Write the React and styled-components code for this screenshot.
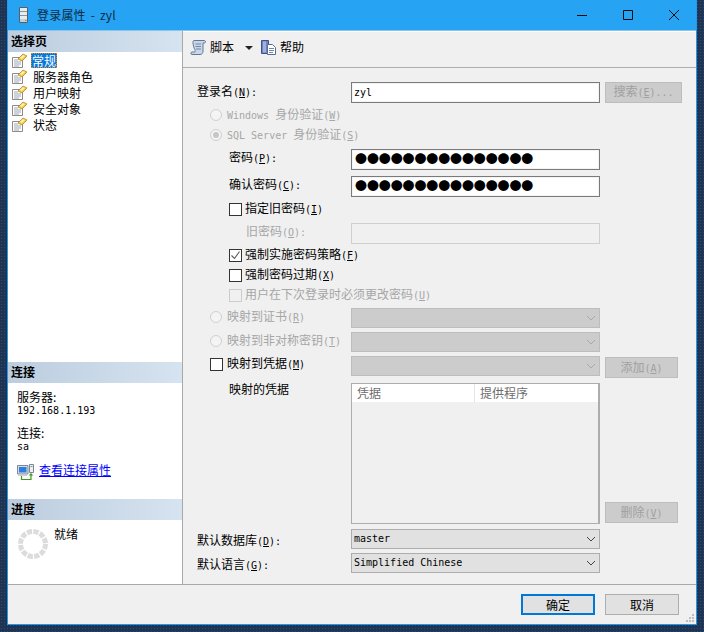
import React from 'react';
import styled, { createGlobalStyle } from 'styled-components';

const GlobalStyle = createGlobalStyle`
  html, body {
    margin: 0;
    padding: 0;
    background: #1f3453;
  }
  body {
    font-family: "Noto Sans CJK SC", "Liberation Sans", sans-serif;
    font-size: 12px;
    line-height: 16px;
    color: #000;
  }
`;

const Desktop = styled.div`
  width: 704px;
  height: 632px;
  box-sizing: border-box;
  padding: 0 7px 7px;
  background-color: #1f3453;
  background-image: radial-gradient(#2f4a70 0.7px, transparent 0.8px);
  background-size: 3px 3px;
  overflow: hidden;
`;

const Window = styled.div`
  height: 625px;
  box-sizing: border-box;
  border: 1px solid #1e9bf0;
  border-top: 0;
  display: flex;
  flex-direction: column;
  background: #f0f0f0;
`;

const TitleBar = styled.div`
  height: 31px;
  flex: none;
  box-sizing: border-box;
  background: #27a3f4;
  border-bottom: 1px solid #8cc3e8;
  display: flex;
  align-items: center;
  padding-left: 8px;
  color: #0c2c44;
`;

const TitleText = styled.span`
  margin-left: 5px;
  flex: 1;
  word-spacing: 2px;
  letter-spacing: 0.2px;
`;

const WinButtons = styled.div`
  display: flex;
  align-items: center;
  gap: 36px;
  padding-right: 17px;
`;

const Body = styled.div`
  flex: 1;
  min-height: 0;
  display: flex;
  border-bottom: 1px solid #a9a9a9;
`;

const Side = styled.div`
  width: 175px;
  flex: none;
  box-sizing: border-box;
  background: #fff;
  border-right: 1px solid #a9a9a9;
  display: flex;
  flex-direction: column;
`;

const SideHead = styled.div`
  height: 21px;
  flex: none;
  box-sizing: border-box;
  padding: 2px 0 0 3px;
  font-weight: 700;
  background: linear-gradient(90deg, #bccddf, #d6e3f0);
`;

const PageList = styled.div`
  flex: 1;
`;

const PageItem = styled.div`
  height: 16px;
  display: flex;
  align-items: center;
  padding-left: 3px;
  gap: 3px;
`;

const PageLabel = styled.span`
  padding: 0 1px;
  margin-left: ${p => (p.$active ? '0' : '1px')};
  height: 15px;
  line-height: 15px;
  color: ${p => (p.$active ? '#fff' : '#000')};
  background: ${p => (p.$active ? '#0a78d7' : 'transparent')};
  outline: ${p => (p.$active ? '1px dotted #e08a20' : 'none')};
  outline-offset: -1px;
`;

const ConnBox = styled.div`
  height: 116px;
  flex: none;
  box-sizing: border-box;
  padding: 8px 0 0 9px;
`;

const ConnLine = styled.div`
  height: 12px;
  line-height: 12px;
  margin-top: ${p => p.$top || 0}px;
`;

const Mono = styled.span`
  font-family: "DejaVu Sans Mono", "Liberation Mono", monospace;
  font-size: 10px;
  white-space: pre;
`;

const Hot = styled(Mono)`
  text-decoration: underline;
`;

const LinkRow = styled.div`
  display: flex;
  align-items: center;
  gap: 5px;
  margin-top: 11px;
`;

const LinkText = styled.a`
  color: #0000ff;
  text-decoration: underline;
  margin-bottom: 4px;
`;

const ProgressBox = styled.div`
  flex: none;
  height: 64px;
  padding: 9px 0 0 10px;
  display: flex;
  gap: 6px;
  align-items: flex-start;
  box-sizing: border-box;
`;

const ProgressText = styled.span`
  margin-top: -3px;
`;

const Main = styled.div`
  flex: 1;
  min-width: 0;
  display: flex;
  flex-direction: column;
`;

const Toolbar = styled.div`
  height: 37px;
  flex: none;
  box-sizing: border-box;
  border-bottom: 1px solid #aeaeae;
  border-top: 1px solid #fff;
  display: flex;
  align-items: center;
  padding: 0 0 5px 7px;
`;

const ToolItem = styled.div`
  display: flex;
  align-items: center;
  gap: 3px;
`;

const Caret = styled.span`
  width: 0;
  height: 0;
  border-left: 4px solid transparent;
  border-right: 4px solid transparent;
  border-top: 4px solid #222;
  margin: 2px 7px 0 11px;
`;

const Form = styled.div`
  flex: 1;
  padding: 13px 0 0 14px;
  display: flex;
  flex-direction: column;
`;

const Row = styled.div`
  display: grid;
  grid-template-columns: 154px 249px auto;
  align-items: ${p => p.$align || 'center'};
  height: ${p => p.$h || 21}px;
  margin-top: ${p => p.$top || 0}px;
`;

const Label = styled.label`
  padding-left: ${p => p.$indent || 0}px;
  color: ${p => (p.$off ? '#a6a6a6' : '#000')};
  margin-top: ${p => p.$shift || 0}px;
  white-space: nowrap;
  display: flex;
  align-items: center;
`;

const Radio = styled.span`
  width: 12px;
  height: 12px;
  box-sizing: border-box;
  flex: none;
  border-radius: 50%;
  border: 1px solid #cfcfcf;
  background: #f4f4f4;
  margin-right: 5px;
  display: grid;
  place-items: center;
  &::after {
    content: '';
    width: 6px;
    height: 6px;
    border-radius: 50%;
    background: ${p => (p.$on ? '#c6c6c6' : 'transparent')};
  }
`;

const Check = styled.span`
  width: 13px;
  height: 13px;
  box-sizing: border-box;
  flex: none;
  border: 1px solid ${p => (p.$off ? '#cccccc' : '#333')};
  background: ${p => (p.$off ? '#f0f0f0' : '#fff')};
  margin-right: ${p => p.$gap || 3}px;
  display: grid;
  place-items: center;
`;

const Input = styled.div`
  height: 21px;
  box-sizing: border-box;
  margin-top: ${p => p.$top || 0}px;
  border: 1px solid ${p => (p.$off ? '#cfcfcf' : '#7a7a7a')};
  background: ${p => (p.$off ? '#f0f0f0' : '#fff')};
  box-shadow: ${p => (p.$off ? 'none' : 'inset 0 0 0 1px #f4f4f4')};
  padding-left: 2px;
  line-height: 18px;
  display: flex;
  align-items: center;
  overflow: hidden;
`;

const Dots = styled.span`
  font-size: 12px;
  line-height: 18px;
  letter-spacing: -0.12px;
  margin: 0 0 2px 1px;
  white-space: nowrap;
`;

const Select = styled.div`
  height: 20px;
  box-sizing: border-box;
  border: 1px solid ${p => (p.$off ? '#bdbdbd' : '#adadad')};
  background: ${p => (p.$off ? '#cccccc' : '#e1e1e1')};
  display: flex;
  align-items: center;
  padding: 0 3px 1px 2px;
  justify-content: space-between;
`;

const Button = styled.div`
  width: ${p => p.$w || 73}px;
  height: 21px;
  box-sizing: border-box;
  margin-left: 5px;
  margin-top: ${p => p.$top || 0}px;
  border: 1px solid #bdbdbd;
  background: #cccccc;
  color: #a0a0a0;
  display: flex;
  align-items: center;
  justify-content: center;
  white-space: nowrap;
`;

const CredTable = styled.div`
  height: 141px;
  box-sizing: border-box;
  border: 1px solid #adadad;
  border-right-width: 2px;
  background: #f0f0f0;
`;

const CredHead = styled.div`
  height: 18px;
  background: #fff;
  display: grid;
  grid-template-columns: 122px 1fr;
  color: #6d6d6d;
  line-height: 18px;
`;

const CredCol = styled.span`
  padding-left: 5px;
  & + & {
    border-left: 1px solid #e5e5e5;
  }
`;

const Footer = styled.div`
  height: 39px;
  flex: none;
  position: relative;
  display: flex;
  justify-content: flex-end;
  gap: 10px;
  padding: 9px 17px 0 0;
  box-sizing: border-box;
`;

const DialogButton = styled.div`
  width: 74px;
  height: 21px;
  box-sizing: border-box;
  border: ${p => (p.$primary ? '2px solid #0078d7' : '1px solid #adadad')};
  background: #e1e1e1;
  display: flex;
  align-items: center;
  justify-content: center;
`;

const Grip = styled.svg`
  position: absolute;
  right: 1px;
  bottom: 1px;
`;

const Chevron = ({ off }) => (
  <svg width="10" height="6" viewBox="0 0 10 6">
    <path d="M1 1l4 4 4-4" fill="none" stroke={off ? '#a9a9a9' : '#444'} strokeWidth="1" />
  </svg>
);

const PageIcon = () => (
  <svg width="17" height="15" viewBox="0 0 17 15">
    <path d="M1.5 4.5h10v10h-10z" fill="#fff" stroke="#8c8c8c" />
    <path d="M3 7h4M3 9h7M3 11h7M3 13h5" stroke="#9aa7b8" strokeWidth="1" />
    <path d="M7 6l5-5 4 2-5 5z" fill="#f3c64a" stroke="#b58a1c" strokeWidth="0.8" />
    <path d="M9 5l3-3 2 1-3 3z" fill="#fff1b0" />
  </svg>
);

const ServerIcon = () => (
  <svg width="16" height="18" viewBox="0 0 16 18">
    <path d="M3.5 1.5h8v15h-8z" fill="#e8ecef" stroke="#55606b" />
    <path d="M4 5h7v1H4zM4 9h7v1H4z" fill="#8895a1" />
    <path d="M4 13h7v3H4z" fill="#c6ced5" />
    <path d="M9 14h1.5v1H9z" fill="#6ea84a" />
  </svg>
);

const ScriptIcon = () => (
  <svg width="17" height="17" viewBox="0 0 17 17">
    <path d="M4 1.5h10.5c1.2 0 1.2 2.5 0 2.5H13v8c0 2-1 3.5-3 3.5H2c-1.5 0-1.5-2.5 0-2.5h2.5c1 0 .8-1.5.3-2.5C4 9 3 6 3 3.5 3 2.5 3.2 1.5 4 1.5z" fill="#c8d6e8" stroke="#5f7896" strokeWidth="1" />
    <path d="M5.5 5h5.5M5.5 7.5h5.5M6 10h5" stroke="#6f88a8" strokeWidth="1" />
  </svg>
);

const HelpIcon = () => (
  <svg width="17" height="17" viewBox="0 0 17 17">
    <path d="M1.5 1.5h7v13h-7z" fill="#6f83c4" stroke="#3f4f8c" />
    <path d="M3 2.5h3v11H3z" fill="#9fb0dd" />
    <path d="M7.5 5.5h5l3 3v7h-8z" fill="#fff" stroke="#5a6a90" />
    <path d="M9 9.5h5M9 11.5h5M9 13.5h4" stroke="#7285ad" strokeWidth="1" />
  </svg>
);

const ConnIcon = () => (
  <svg width="17" height="17" viewBox="0 0 17 17">
    <path d="M.5 1.5h10.5v8.5H.5z" fill="#d7dde6" stroke="#7d8794" />
    <path d="M2 3h7.5v5.5H2z" fill="#2a7fe0" />
    <path d="M1 10.5h9V12H1z" fill="#c8ced6" />
    <path d="M12.5.5h4v8h-4z" fill="#eef1f4" stroke="#7d8794" />
    <path d="M13.5 2h2v1h-2z" fill="#8b97a5" />
    <path d="M4.5 12v3.5h9.5V11" fill="none" stroke="#3d9a1d" strokeWidth="1.2" />
    <path d="M11.7 11.5h4.6L14 9z" fill="#3d9a1d" />
  </svg>
);

const Spinner = () => (
  <svg width="30" height="30" viewBox="0 0 30 30">
    <circle cx="15" cy="15" r="12.5" fill="none" stroke="#dcdcdc" strokeWidth="5" strokeDasharray="5.2 1.35" />
  </svg>
);

const WinMin = () => (
  <svg width="10" height="10" viewBox="0 0 10 10">
    <path d="M0 5.5h10" stroke="#0a0a0a" />
  </svg>
);

const WinMax = () => (
  <svg width="10" height="10" viewBox="0 0 10 10">
    <path d="M.5.5h9v9h-9z" fill="none" stroke="#0a0a0a" />
  </svg>
);

const WinClose = () => (
  <svg width="10" height="10" viewBox="0 0 10 10">
    <path d="M0 0l10 10M10 0L0 10" stroke="#0a0a0a" />
  </svg>
);

const Tick = () => (
  <svg width="11" height="11" viewBox="0 0 11 11">
    <path d="M1.5 5.5l3 3 5-7" fill="none" stroke="#5a5a5a" strokeWidth="1.1" />
  </svg>
);

// label text followed by the shortcut in half width, e.g. 登录名(N):
const Keyed = ({ prefix, text, k, tail = '' }) => (
  <span>
    {prefix && <Mono>{prefix}</Mono>}
    {text}
    <Mono>(</Mono>
    <Hot>{k}</Hot>
    <Mono>){tail}</Mono>
  </span>
);

const pages = ['常规', '服务器角色', '用户映射', '安全对象', '状态'];

const App = () => (
  <Desktop>
    <GlobalStyle />
    <Window>
      <TitleBar>
        <ServerIcon />
        <TitleText>登录属性 - zyl</TitleText>
        <WinButtons>
          <WinMin />
          <WinMax />
          <WinClose />
        </WinButtons>
      </TitleBar>
      <Body>
        <Side>
          <SideHead>选择页</SideHead>
          <PageList>
            {pages.map((page, i) => (
              <PageItem key={page}>
                <PageIcon />
                <PageLabel $active={i === 0}>{page}</PageLabel>
              </PageItem>
            ))}
          </PageList>
          <SideHead>连接</SideHead>
          <ConnBox>
            <ConnLine>服务器:</ConnLine>
            <ConnLine><Mono>192.168.1.193</Mono></ConnLine>
            <ConnLine $top={12}>连接:</ConnLine>
            <ConnLine><Mono>sa</Mono></ConnLine>
            <LinkRow>
              <ConnIcon />
              <LinkText>查看连接属性</LinkText>
            </LinkRow>
          </ConnBox>
          <SideHead>进度</SideHead>
          <ProgressBox>
            <Spinner />
            <ProgressText>就绪</ProgressText>
          </ProgressBox>
        </Side>
        <Main>
          <Toolbar>
            <ToolItem>
              <ScriptIcon />
              脚本
            </ToolItem>
            <Caret />
            <ToolItem>
              <HelpIcon />
              帮助
            </ToolItem>
          </Toolbar>
          <Form>
            <Row>
              <Label><Keyed text="登录名" k="N" tail=":" /></Label>
              <Input $top={1}><Mono>zyl</Mono></Input>
              <Button $w={77}><Keyed text="搜索" k="E" tail="..." /></Button>
            </Row>
            <Row $h={20} $top={3}>
              <Label $indent={13} $off><Radio /><Keyed prefix="Windows " text="身份验证" k="W" /></Label>
            </Row>
            <Row $h={20}>
              <Label $indent={13} $off><Radio $on /><Keyed prefix="SQL Server " text="身份验证" k="S" /></Label>
            </Row>
            <Row $top={4}>
              <Label $indent={32} $shift={-4}><Keyed text="密码" k="P" tail=":" /></Label>
              <Input><Dots>●●●●●●●●●●●●●●●</Dots></Input>
            </Row>
            <Row $top={6}>
              <Label $indent={32} $shift={-4}><Keyed text="确认密码" k="C" tail=":" /></Label>
              <Input><Dots>●●●●●●●●●●●●●●●</Dots></Input>
            </Row>
            <Row $h={20} $top={2}>
              <Label $indent={32}><Check /><Keyed text="指定旧密码" k="I" /></Label>
            </Row>
            <Row $top={4}>
              <Label $indent={49} $off $shift={-4}><Keyed text="旧密码" k="O" tail=":" /></Label>
              <Input $off />
            </Row>
            <Row $h={20} $top={1}>
              <Label $indent={32}><Check><Tick /></Check><Keyed text="强制实施密码策略" k="F" /></Label>
            </Row>
            <Row $h={20}>
              <Label $indent={32}><Check /><Keyed text="强制密码过期" k="X" /></Label>
            </Row>
            <Row $h={20}>
              <Label $indent={32} $off><Check $off /><Keyed text="用户在下次登录时必须更改密码" k="U" /></Label>
            </Row>
            <Row $h={20} $top={3}>
              <Label $indent={13} $off $shift={-2}><Radio /><Keyed text="映射到证书" k="R" /></Label>
              <Select $off><span /><Chevron off /></Select>
            </Row>
            <Row $h={20} $top={4}>
              <Label $indent={13} $off $shift={-2}><Radio /><Keyed text="映射到非对称密钥" k="T" /></Label>
              <Select $off><span /><Chevron off /></Select>
            </Row>
            <Row $h={20} $top={4} $align="start">
              <Label $indent={13} $shift={-1}><Check $gap={4} /><Keyed text="映射到凭据" k="M" /></Label>
              <Select $off><span /><Chevron off /></Select>
              <Button $top={1}><Keyed text="添加" k="A" /></Button>
            </Row>
            <Row $h={141} $top={7} $align="start">
              <Label $indent={32} $shift={-2}>映射的凭据</Label>
              <CredTable>
                <CredHead>
                  <CredCol>凭据</CredCol>
                  <CredCol>提供程序</CredCol>
                </CredHead>
              </CredTable>
              <Button $top={119}><Keyed text="删除" k="V" /></Button>
            </Row>
            <Row $h={20} $top={4}>
              <Label $shift={4}><Keyed text="默认数据库" k="D" tail=":" /></Label>
              <Select><Mono>master</Mono><Chevron /></Select>
            </Row>
            <Row $h={20} $top={4}>
              <Label $shift={4}><Keyed text="默认语言" k="G" tail=":" /></Label>
              <Select><Mono>Simplified Chinese</Mono><Chevron /></Select>
            </Row>
          </Form>
        </Main>
      </Body>
      <Footer>
        <DialogButton $primary>确定</DialogButton>
        <DialogButton>取消</DialogButton>
        <Grip width="9" height="9" viewBox="0 0 9 9">
          <path d="M6 0h2v2H6zM3 3h2v2H3zM6 3h2v2H6zM0 6h2v2H0zM3 6h2v2H3zM6 6h2v2H6z" fill="#bdbdbd" />
        </Grip>
      </Footer>
    </Window>
  </Desktop>
);

export default App;
